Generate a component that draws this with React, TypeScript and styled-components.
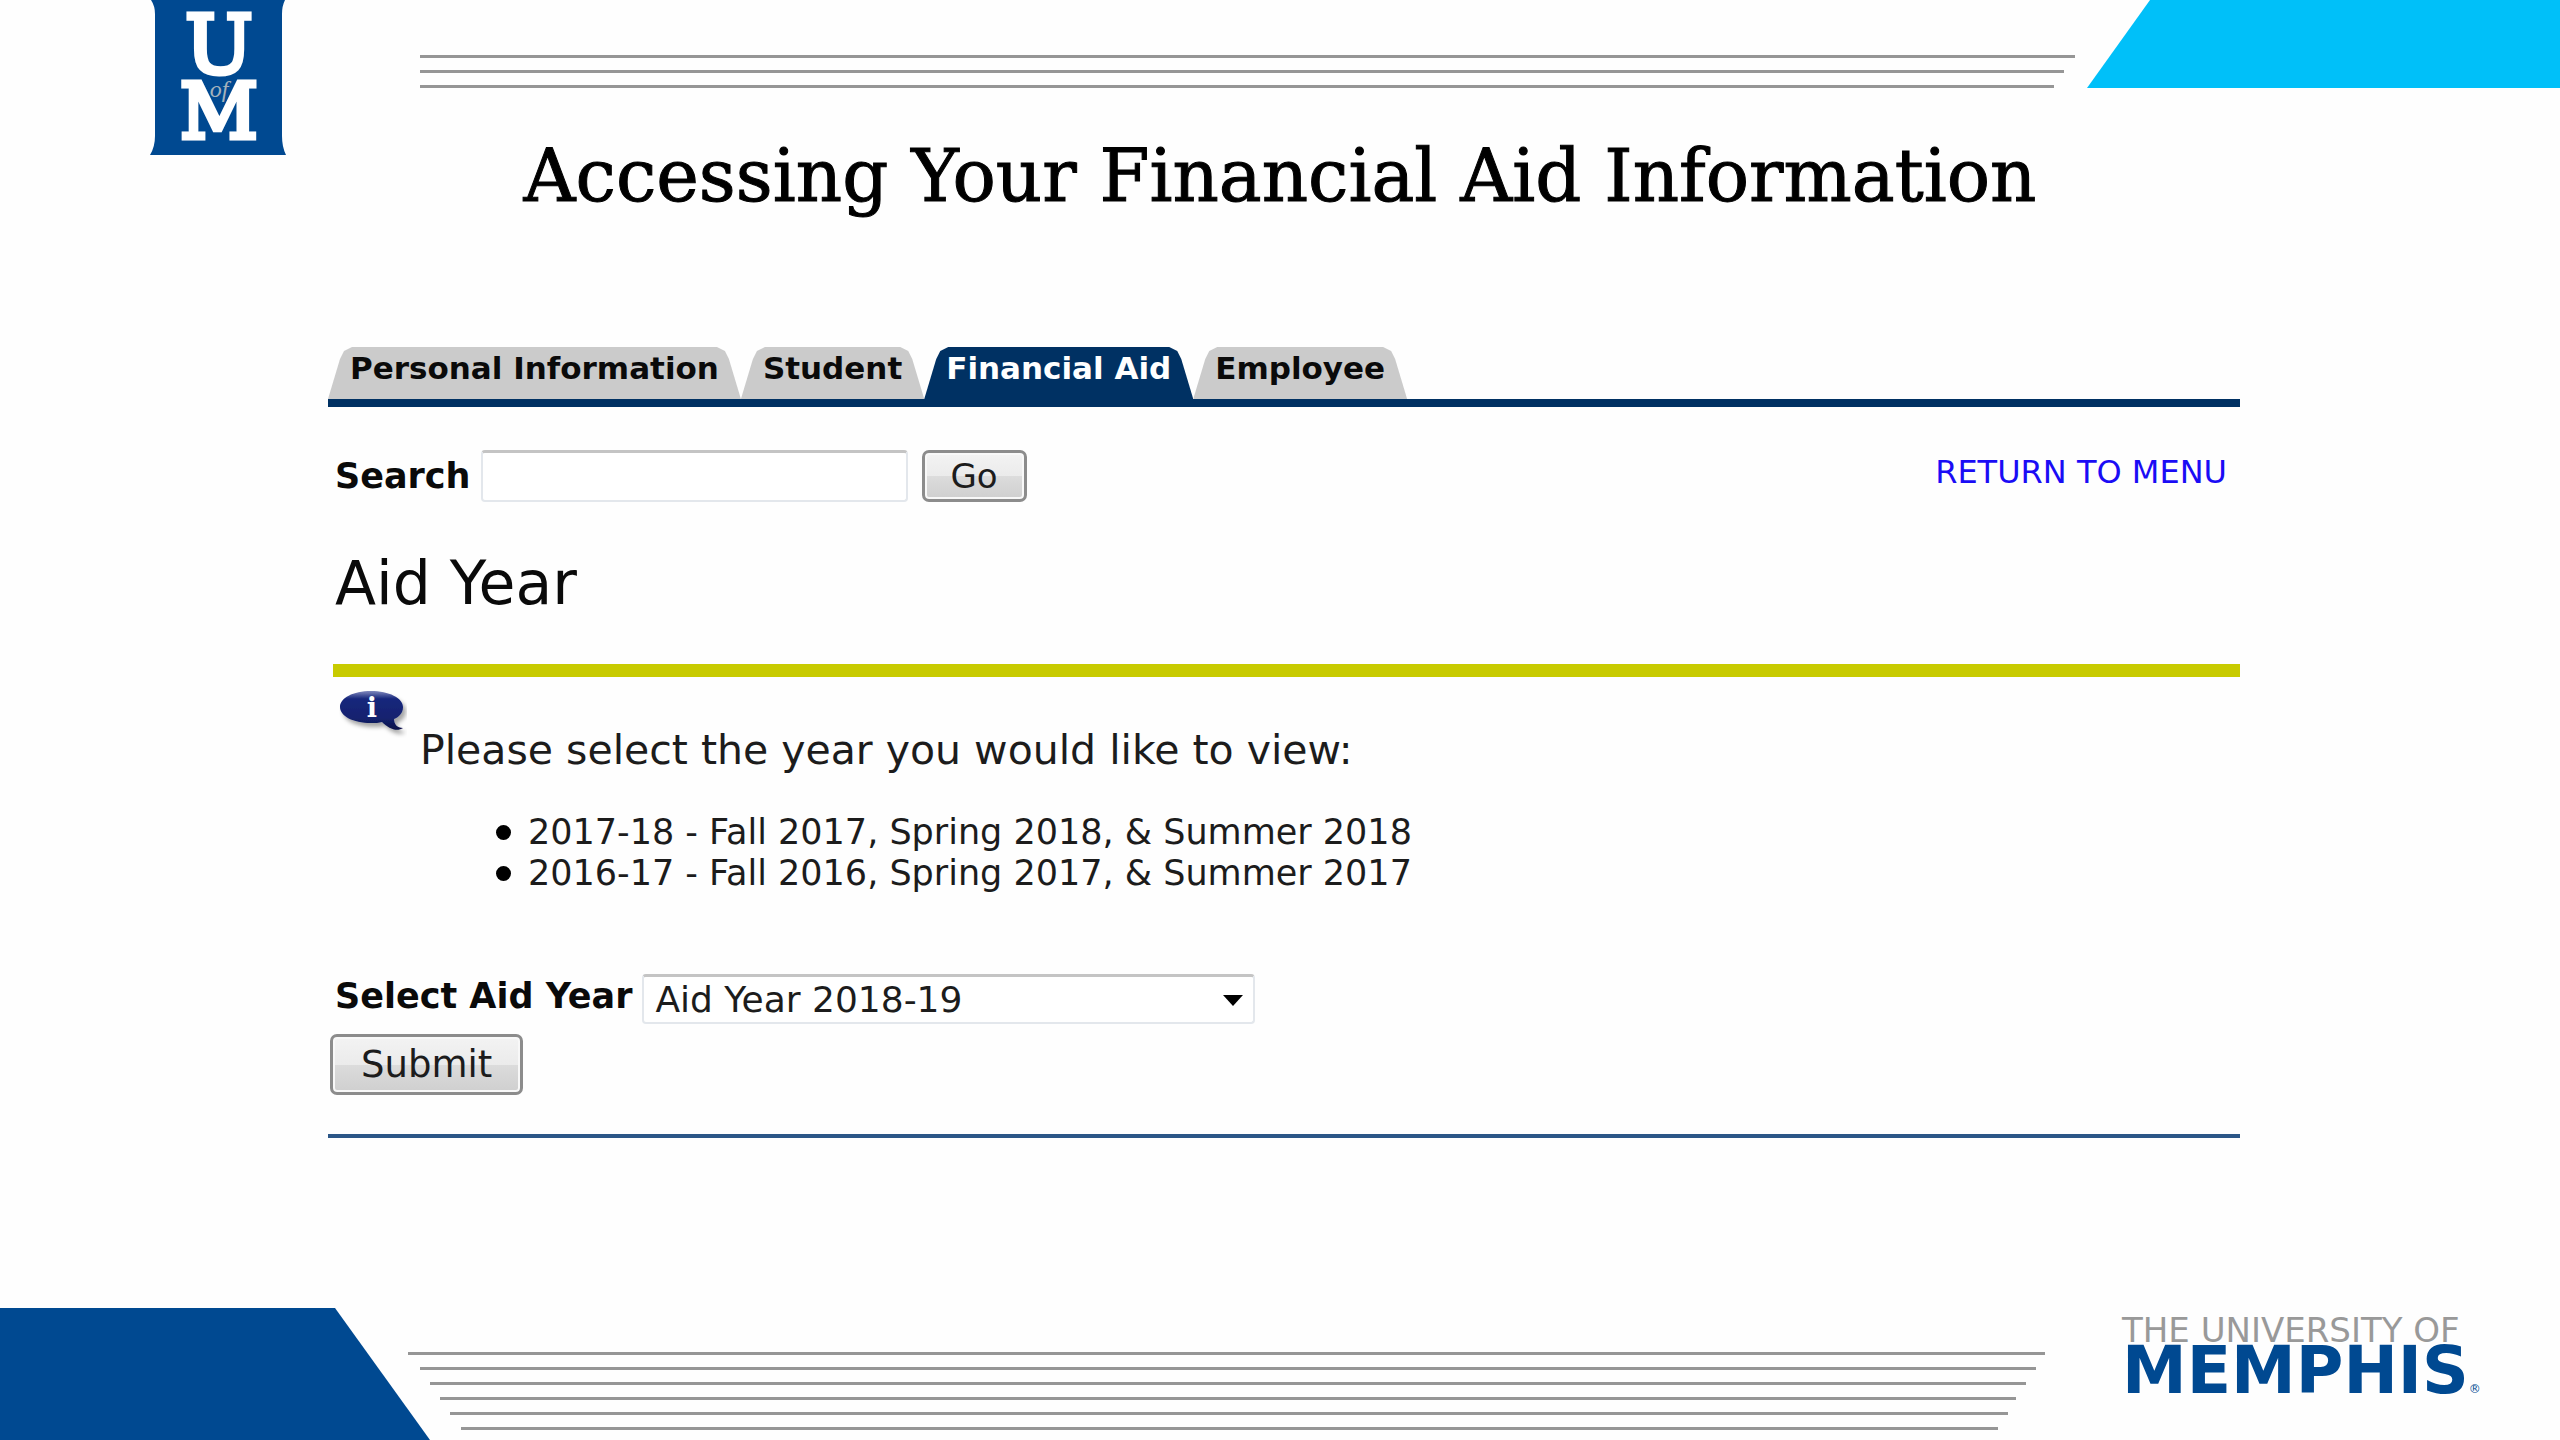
import React from "react";
import styled, { createGlobalStyle, css } from "styled-components";

const sans = `"DejaVu Sans", Verdana, sans-serif`;
const slab = `"DejaVu Serif", serif`;

const colors = {
  brand: "#004991",
  sky: "#00c0f9",
  navy: "#003163",
  tab: "#cbcbcb",
  rule: "#969696",
  olive: "#c8cb00",
  link: "#1a0cf5",
};

const GlobalStyle = createGlobalStyle`
  *, *::before, *::after { box-sizing: border-box; }
  body { margin: 0; background: #fefefe; color: #0a0a0a; font-family: ${sans}; }
`;

const Slide = styled.div`
  display: flex;
  flex-direction: column;
  min-height: 100vh;
  overflow: hidden;
`;

const Header = styled.header`
  display: flex;
  align-items: flex-start;
  height: 134px;
  padding-left: 150px;
`;

const Crest = styled.svg`
  flex: none;
  width: 136px;
  height: 155px;
`;

const HeaderRules = styled.div`
  flex: 1;
  display: flex;
  flex-direction: column;
  gap: 12px;
  margin: 55px 12px 0 134px;
`;

const FooterRules = styled(HeaderRules)`
  margin: 44px 77px 0 -22px;
`;

const Rule = styled.span<{ $left?: number; $right?: number }>`
  height: 3px;
  margin-left: ${(p) => p.$left ?? 0}px;
  margin-right: ${(p) => p.$right ?? 0}px;
  background: ${colors.rule};
`;

const SkyWedge = styled.div`
  flex: none;
  width: 473px;
  height: 88px;
  background: ${colors.sky};
  clip-path: polygon(63px 0, 100% 0, 100% 100%, 0 100%);
`;

const BrandWedge = styled.div`
  flex: none;
  width: 430px;
  height: 132px;
  background: ${colors.brand};
  clip-path: polygon(0 0, 335px 0, 100% 100%, 0 100%);
`;

const Title = styled.h1`
  margin: 0;
  text-align: center;
  font: 400 72px/84px ${slab};
  color: #000;
  -webkit-text-stroke: 1px #000;
`;

const Main = styled.main`
  margin: 129px 320px 0 328px;
`;

const Tabs = styled.nav`
  display: flex;
  border-bottom: 8px solid ${colors.navy};
`;

const Tab = styled.a<{ $active?: boolean }>`
  height: 52px;
  padding: 0 22px;
  font-size: 31px;
  font-weight: 700;
  line-height: 42px;
  white-space: nowrap;
  text-decoration: none;
  color: ${(p) => (p.$active ? "#fff" : "#0a0a0a")};
  background: ${(p) => (p.$active ? colors.navy : colors.tab)};
  clip-path: polygon(
    0 100%, 12px 12px, 16px 4px, 24px 0,
    calc(100% - 24px) 0, calc(100% - 16px) 4px, calc(100% - 12px) 12px, 100% 100%
  );
`;

const SearchRow = styled.form`
  display: flex;
  align-items: center;
  margin-top: 43px;
  padding: 0 13px 0 7px;
`;

const Label = styled.label`
  margin-right: 10px;
  font-size: 35px;
  font-weight: 700;
  line-height: 44px;
  white-space: nowrap;
`;

const field = css`
  border: 2px solid #e3e7ec;
  border-top: 3px solid #c4c4c4;
  border-radius: 4px;
  background: #fff;
  color: #1c1c1c;
  font-family: ${sans};
`;

const SearchInput = styled.input`
  ${field}
  width: 427px;
  height: 52px;
  padding: 0 12px;
  font-size: 31px;
`;

const Button = styled.button<{ $large?: boolean }>`
  height: ${(p) => (p.$large ? 61 : 52)}px;
  padding: 0 ${(p) => (p.$large ? 28 : 26)}px;
  border: 3px solid #8c8c8c;
  border-radius: 7px;
  background: linear-gradient(#f3f3f3, #ebebeb 50%, #dcdcdc 50%, #cfcfcf);
  box-shadow: inset 0 0 0 2px #f8f8f8;
  color: #1c1c1c;
  font-family: ${sans};
  font-size: ${(p) => (p.$large ? 37 : 34)}px;
`;

const GoButton = styled(Button)`
  margin-left: 14px;
`;

const MenuLink = styled.a`
  align-self: flex-start;
  margin-left: auto;
  font-size: 32px;
  line-height: 44px;
  color: ${colors.link};
  text-decoration: none;
  white-space: nowrap;
`;

const PageHeading = styled.h2`
  margin: 46px 0 46px 7px;
  font-size: 60px;
  font-weight: 400;
  line-height: 70px;
`;

const OliveRule = styled.hr`
  height: 13px;
  margin: 0 0 0 5px;
  border: 0;
  background: ${colors.olive};
`;

const Info = styled.section`
  display: flex;
  align-items: flex-start;
  gap: 13px;
  padding: 13px 0 0 11px;
`;

const InfoIcon = styled.svg`
  flex: none;
  width: 68px;
  height: 48px;
`;

const Prompt = styled.p`
  margin: 36px 0 38px;
  font-size: 41px;
  line-height: 48px;
  color: #1c1c1c;
`;

const YearList = styled.ul`
  margin: 0;
  padding: 0 0 0 76px;
  list-style: none;
`;

const YearItem = styled.li`
  display: flex;
  align-items: center;
  gap: 17px;
  font-size: 35px;
  line-height: 41px;
  color: #1c1c1c;

  &::before {
    content: "";
    width: 15px;
    height: 15px;
    border-radius: 50%;
    background: #000;
  }
`;

const YearForm = styled.form`
  margin-top: 80px;
`;

const YearRow = styled.div`
  display: flex;
  align-items: flex-start;
  margin-bottom: 10px;
  padding-left: 7px;
`;

const SelectBox = styled.div`
  position: relative;
  width: 613px;
`;

const Select = styled.select`
  ${field}
  appearance: none;
  width: 100%;
  height: 50px;
  padding: 0 40px 0 11px;
  font-size: 36px;
`;

const Caret = styled.svg`
  position: absolute;
  top: 21px;
  right: 12px;
  width: 20px;
  height: 11px;
  pointer-events: none;
`;

const SubmitButton = styled(Button)`
  display: block;
  margin-left: 2px;
`;

const EndRule = styled.hr`
  height: 4px;
  margin: 39px 0 0;
  border: 0;
  background: #2b5687;
`;

const Footer = styled.footer`
  display: flex;
  align-items: flex-start;
  height: 132px;
  margin-top: auto;
`;

const Wordmark = styled.div`
  flex: none;
  display: flex;
  flex-direction: column;
  gap: 2px;
  width: 438px;
  padding-top: 6px;
  white-space: nowrap;
`;

const WordmarkTop = styled.span`
  font-size: 34px;
  line-height: 32px;
  color: #999;
`;

const WordmarkName = styled.span`
  font-size: 65px;
  font-weight: 700;
  line-height: 46px;
  color: ${colors.brand};
`;

const Registered = styled.small`
  font-size: 12px;
  font-weight: 400;
`;

const tabs = ["Personal Information", "Student", "Financial Aid", "Employee"];
const years = [
  "2017-18 - Fall 2017, Spring 2018, & Summer 2018",
  "2016-17 - Fall 2016, Spring 2017, & Summer 2017",
];
const headerRules = [0, 11, 21];
const footerRules = [
  [0, 0],
  [12, 9],
  [22, 19],
  [32, 29],
  [42, 37],
  [53, 47],
];

export default function App() {
  return (
    <Slide>
      <GlobalStyle />
      <Header>
        <Crest viewBox="0 0 136 155" role="img" aria-label="University of Memphis crest">
          <path
            d="M1 0H135Q132 6 132 14V136Q132 147 136 155H0Q5 147 5 136V14Q5 6 1 0Z"
            fill={colors.brand}
          />
          <g
            fontFamily="DejaVu Serif"
            fill="#fff"
            stroke="#fff"
            strokeWidth="5"
            textAnchor="middle"
          >
            <text x="69" y="73" fontSize="80">U</text>
            <text x="69" y="138" fontSize="76">M</text>
          </g>
          <text
            x="69"
            y="97"
            fontFamily="Liberation Serif"
            fontStyle="italic"
            fontSize="24"
            fill="#a3b1bc"
            textAnchor="middle"
          >
            of
          </text>
        </Crest>
        <HeaderRules>
          {headerRules.map((right) => (
            <Rule key={right} $right={right} />
          ))}
        </HeaderRules>
        <SkyWedge />
      </Header>

      <Title>Accessing Your Financial Aid Information</Title>

      <Main>
        <Tabs>
          {tabs.map((name) => (
            <Tab key={name} href="#" $active={name === "Financial Aid"}>
              {name}
            </Tab>
          ))}
        </Tabs>

        <SearchRow onSubmit={(e) => e.preventDefault()}>
          <Label htmlFor="search">Search</Label>
          <SearchInput id="search" type="text" />
          <GoButton type="submit">Go</GoButton>
          <MenuLink href="#">RETURN TO MENU</MenuLink>
        </SearchRow>

        <PageHeading>Aid Year</PageHeading>
        <OliveRule />

        <Info>
          <InfoIcon viewBox="0 0 68 48" aria-hidden="true">
            <defs>
              <linearGradient id="bubble" x1="0" y1="0" x2="0" y2="1">
                <stop offset="0" stopColor="#8088bd" />
                <stop offset="0.2" stopColor="#17277c" />
                <stop offset="0.7" stopColor="#14226f" />
                <stop offset="1" stopColor="#080f45" />
              </linearGradient>
              <filter id="shade" x="-20%" y="-20%" width="140%" height="150%">
                <feDropShadow dx="3" dy="4" stdDeviation="2" floodColor="#000" floodOpacity="0.35" />
              </filter>
            </defs>
            <path
              d="M32 1C50 1 64 8 64 17C64 23 60 27 55 29C55 34 58 38 64 38C58 42 50 39 43 32C40 33 36 33 32 33C14 33 1 26 1 17C1 8 14 1 32 1Z"
              fill="url(#bubble)"
              filter="url(#shade)"
            />
            <text
              x="33"
              y="27"
              fontFamily="DejaVu Serif"
              fontWeight="700"
              fontSize="27"
              fill="#fff"
              textAnchor="middle"
            >
              i
            </text>
          </InfoIcon>
          <div>
            <Prompt>Please select the year you would like to view:</Prompt>
            <YearList>
              {years.map((year) => (
                <YearItem key={year}>{year}</YearItem>
              ))}
            </YearList>
          </div>
        </Info>

        <YearForm onSubmit={(e) => e.preventDefault()}>
          <YearRow>
            <Label htmlFor="aid-year">Select Aid Year</Label>
            <SelectBox>
              <Select id="aid-year" defaultValue="2018">
                <option value="2018">Aid Year 2018-19</option>
              </Select>
              <Caret viewBox="0 0 20 11" aria-hidden="true">
                <path d="M0 0H20L10 11Z" fill="#000" />
              </Caret>
            </SelectBox>
          </YearRow>
          <SubmitButton type="submit" $large>
            Submit
          </SubmitButton>
        </YearForm>
        <EndRule />
      </Main>

      <Footer>
        <BrandWedge />
        <FooterRules>
          {footerRules.map(([left, right]) => (
            <Rule key={left} $left={left} $right={right} />
          ))}
        </FooterRules>
        <Wordmark>
          <WordmarkTop>THE UNIVERSITY OF</WordmarkTop>
          <WordmarkName>
            MEMPHIS<Registered>®</Registered>
          </WordmarkName>
        </Wordmark>
      </Footer>
    </Slide>
  );
}
